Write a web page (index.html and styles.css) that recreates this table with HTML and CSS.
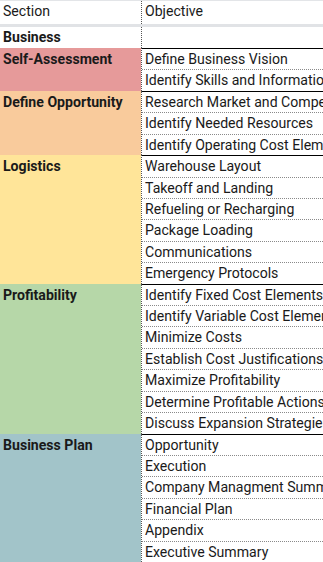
FILE: index.html
```html
<!DOCTYPE html>
<html>
<head>
<meta charset="utf-8">
<link rel="stylesheet" href="styles.css">
</head>
<body>
<div class="sheet">
  <div class="section head">
    <div class="label">Section</div>
    <div class="items"><div class="item">Objective</div></div>
  </div>
  <div class="section business">
    <div class="label bold">Business</div>
    <div class="items"><div class="item"></div></div>
  </div>
  <div class="section red">
    <div class="label bold">Self-Assessment</div>
    <div class="items">
      <div class="item">Define Business Vision</div>
      <div class="item">Identify Skills and Information</div>
    </div>
  </div>
  <div class="section orange">
    <div class="label bold">Define Opportunity</div>
    <div class="items">
      <div class="item">Research Market and Competition</div>
      <div class="item">Identify Needed Resources</div>
      <div class="item">Identify Operating Cost Elements</div>
    </div>
  </div>
  <div class="section yellow">
    <div class="label bold">Logistics</div>
    <div class="items">
      <div class="item">Warehouse Layout</div>
      <div class="item">Takeoff and Landing</div>
      <div class="item">Refueling or Recharging</div>
      <div class="item">Package Loading</div>
      <div class="item">Communications</div>
      <div class="item">Emergency Protocols</div>
    </div>
  </div>
  <div class="section green">
    <div class="label bold">Profitability</div>
    <div class="items">
      <div class="item">Identify Fixed Cost Elements</div>
      <div class="item">Identify Variable Cost Elements</div>
      <div class="item">Minimize Costs</div>
      <div class="item">Establish Cost Justifications</div>
      <div class="item">Maximize Profitability</div>
      <div class="item">Determine Profitable Actions</div>
      <div class="item">Discuss Expansion Strategies</div>
    </div>
  </div>
  <div class="section cyan">
    <div class="label bold">Business Plan</div>
    <div class="items">
      <div class="item">Opportunity</div>
      <div class="item">Execution</div>
      <div class="item">Company Managment Summary</div>
      <div class="item">Financial Plan</div>
      <div class="item">Appendix</div>
      <div class="item">Executive Summary</div>
    </div>
  </div>
</div>
</body>
</html>
```
FILE: styles.css
```css
html, body {
  margin: 0;
  padding: 0;
  background: #fff;
  overflow: hidden;
}
.sheet {
  width: 323px;
  font-family: Roboto, "Liberation Sans", sans-serif;
  font-size: 14.1px;
  color: #1a1a1a;
  overflow: hidden;
}
.section {
  display: flex;
}
.label {
  width: 141px;
  flex: none;
  box-sizing: border-box;
  padding: 2px 3px 0 3px;
  line-height: 18px;
  white-space: nowrap;
  overflow: hidden;
}
.bold { font-weight: 700; }
.items {
  flex: 1;
  min-width: 0;
  border-left: 1px dotted #555;
  display: flex;
  flex-direction: column;
}
.item {
  height: 21.43px;
  box-sizing: border-box;
  border-top: 1px dotted #8a8a8a;
  padding: 1px 0 0 3px;
  line-height: 18px;
  white-space: nowrap;
  overflow: hidden;
}
.item:first-child { border-top: 1px solid #000; }
.head {
  border-top: 1px solid #e3e5e8;
  border-bottom: 3px solid #e1e3e6;
}
.head .item {
  height: 23px;
  border-top: none;
  padding-top: 1px;
}
.head .label { padding-top: 1px; }
.business .item {
  height: 21px;
  border-top: none;
}
.business .label { padding-top: 1px; }
.red { background: linear-gradient(to right, #e69a9a 141px, #fff 141px); }
.orange { background: linear-gradient(to right, #f9cb9c 141px, #fff 141px); }
.yellow { background: linear-gradient(to right, #ffe599 141px, #fff 141px); }
.green { background: linear-gradient(to right, #b6d7a8 141px, #fff 141px); }
.cyan { background: linear-gradient(to right, #a2c4c9 141px, #fff 141px); }
```
